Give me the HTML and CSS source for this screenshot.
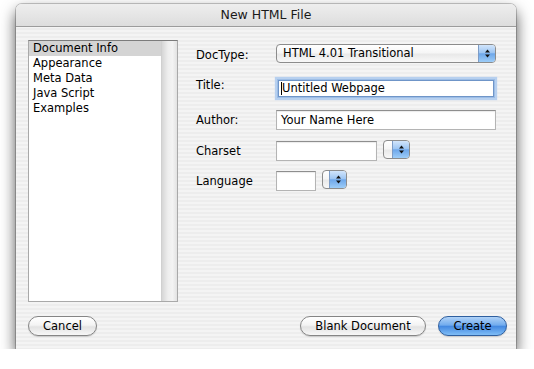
FILE: index.html
```html
<!DOCTYPE html>
<html lang="en">

<head>
    <meta charset="UTF-8">
    <title>New HTML File</title>
    <link rel="stylesheet" href="styles.css">
</head>

<body>
    <div class="window">
        <div class="titlebar">New HTML File</div>
        <div class="content">
            <div class="main">
                <div class="listbox">
                    <ul class="items">
                        <li class="selected">Document Info</li>
                        <li>Appearance</li>
                        <li>Meta Data</li>
                        <li>Java Script</li>
                        <li>Examples</li>
                    </ul>
                    <div class="track"></div>
                </div>
                <div class="form">
                    <div class="row row-doctype">
                        <span class="label">DocType:</span>
                        <div class="popup popup-wide">
                            <span class="popup-text">HTML 4.01 Transitional</span>
                            <span class="arrows">
                                <svg width="5" height="9" viewBox="0 0 5 9"><polygon points="0,3.5 2.5,0.5 5,3.5" /><polygon points="0,5.5 2.5,8.5 5,5.5" /></svg>
                            </span>
                        </div>
                    </div>
                    <div class="row row-title">
                        <span class="label">Title:</span>
                        <div class="field field-focus"><span class="caret"></span>Untitled Webpage</div>
                    </div>
                    <div class="row row-author">
                        <span class="label">Author:</span>
                        <div class="field field-wide">Your Name Here</div>
                    </div>
                    <div class="row row-charset">
                        <span class="label">Charset</span>
                        <div class="field field-charset"></div>
                        <div class="popup popup-small">
                            <span class="arrows">
                                <svg width="5" height="9" viewBox="0 0 5 9"><polygon points="0,3.5 2.5,0.5 5,3.5" /><polygon points="0,5.5 2.5,8.5 5,5.5" /></svg>
                            </span>
                        </div>
                    </div>
                    <div class="row row-language">
                        <span class="label">Language</span>
                        <div class="field field-language"></div>
                        <div class="popup popup-small popup-lang">
                            <span class="arrows">
                                <svg width="5" height="9" viewBox="0 0 5 9"><polygon points="0,3.5 2.5,0.5 5,3.5" /><polygon points="0,5.5 2.5,8.5 5,5.5" /></svg>
                            </span>
                        </div>
                    </div>
                </div>
            </div>
            <div class="buttons">
                <button class="btn btn-cancel">Cancel</button>
                <div class="spacer"></div>
                <button class="btn btn-blank">Blank Document</button>
                <button class="btn btn-create">Create</button>
            </div>
        </div>
    </div>
</body>

</html>
```

FILE: styles.css
```css
body {
    margin: 0;
    padding: 4px 0 0 16px;
    background: #fff;
    font-family: "DejaVu Sans", sans-serif;
    font-size: 11.5px;
    color: #000;
}

.window {
    width: 500px;
    height: 345px;
    display: flex;
    flex-direction: column;
    border-radius: 6px 6px 0 0;
    background: repeating-linear-gradient(#ededed 0, #ededed 2px, #f4f4f4 2px, #f4f4f4 4px);
    box-shadow: 0 0 0 1px rgba(0, 0, 0, 0.2), 0 7px 15px rgba(0, 0, 0, 0.7);
}

.titlebar {
    height: 22px;
    line-height: 22px;
    text-align: center;
    font-size: 12.5px;
    color: #1a1a1a;
    border-radius: 6px 6px 0 0;
    background: linear-gradient(#eeeeee, #dddddd);
    border-bottom: 1px solid #9c9c9c;
}

.content {
    flex: 1;
    display: flex;
    flex-direction: column;
    padding: 13px 9px 13px 12px;
}

.main {
    display: flex;
    height: 262px;
}

/* list on the left */
.listbox {
    width: 148px;
    display: flex;
    background: #fff;
    border: 1px solid #a9a9a9;
    border-top-color: #7c7c7c;
}

.items {
    flex: 1;
    list-style: none;
    margin: 0;
    padding: 0;
}

.items li {
    height: 15px;
    line-height: 15px;
    padding-left: 4px;
}

.items li.selected {
    background: #d4d4d4;
}

.track {
    width: 15px;
    background: linear-gradient(to right, #d6d6d6, #eeeeee 40%, #f3f3f3 70%, #e2e2e2);
    border-left: 1px solid #d0d0d0;
}

/* form on the right */
.form {
    margin-left: 18px;
    padding-top: 4px;
    display: flex;
    flex-direction: column;
}

.row {
    display: flex;
    align-items: center;
}

.label {
    width: 80px;
}

.row-doctype .label {
    margin-bottom: -3px;
}

.row-title {
    margin-top: 17px;
}

.row-title .label {
    margin-top: -8px;
}

.row-author {
    margin-top: 13px;
}

.row-charset {
    margin-top: 11px;
}

.row-language {
    margin-top: 10px;
}

.field {
    box-sizing: border-box;
    height: 20px;
    line-height: 18px;
    padding-left: 4px;
    background: #fff;
    border: 1px solid #b4b4b4;
    border-top-color: #8e8e8e;
    box-shadow: inset 0 1px 1px rgba(0, 0, 0, 0.08);
}

.field-wide {
    width: 220px;
}

.field-focus {
    width: 216px;
    height: 17px;
    line-height: 15px;
    margin-left: 2px;
    padding-left: 2px;
    display: flex;
    align-items: center;
    border-color: #6f95c8;
    box-shadow: 0 0 0 1px #9cbde6, 0 0 1px 3px #b7d0ef;
}

.caret {
    width: 1px;
    height: 13px;
    background: #000;
}

.field-charset {
    width: 101px;
}

.field-language {
    width: 40px;
}

/* pop-up buttons */
.popup {
    box-sizing: border-box;
    height: 19px;
    display: flex;
    align-items: stretch;
    border: 1px solid #8c8c8c;
    border-radius: 4px;
    overflow: hidden;
    background: linear-gradient(#ffffff 0%, #f6f6f6 45%, #e9e9e9 55%, #f8f8f8 100%);
}

.popup-wide {
    width: 220px;
}

.popup-text {
    flex: 1;
    padding-left: 6px;
    line-height: 17px;
}

.popup-small {
    width: 27px;
    margin-left: 6px;
    justify-content: flex-end;
    align-self: flex-start;
    margin-top: -1px;
}

.popup-lang {
    width: 25px;
}

.arrows {
    width: 16px;
    display: flex;
    align-items: center;
    justify-content: center;
    border-left: 1px solid #7d9cc6;
    background: linear-gradient(#d2e5fb 0%, #9ec6f3 45%, #6ea7ea 52%, #9dcdf8 100%);
}

.arrows svg {
    fill: #111;
}

/* bottom buttons */
.buttons {
    display: flex;
    margin-top: 14px;
}

.spacer {
    flex: 1;
}

.btn {
    height: 20px;
    padding: 0;
    font-family: "DejaVu Sans", sans-serif;
    font-size: 11.5px;
    color: #000;
    border: 1px solid #858585;
    border-radius: 10px;
    background: linear-gradient(#ffffff 0%, #f4f4f4 45%, #e3e3e3 55%, #f7f7f7 100%);
    box-shadow: 0 1px 1px rgba(0, 0, 0, 0.15);
}

.btn-cancel {
    width: 69px;
}

.btn-blank {
    width: 126px;
}

.btn-create {
    width: 69px;
    margin-left: 12px;
    border-color: #2f5f9f;
    background: linear-gradient(#b0d2f7 0%, #72acee 45%, #4489e1 52%, #7fbdf6 100%);
}
```
